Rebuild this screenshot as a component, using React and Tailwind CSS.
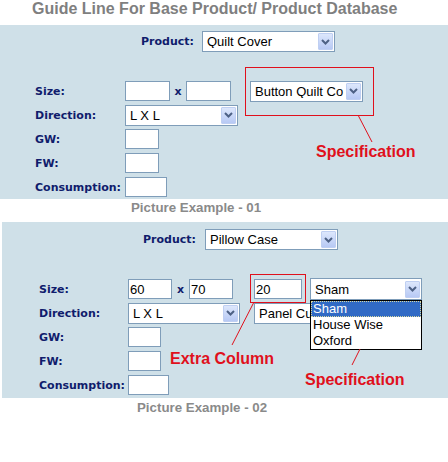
import React from "react";

const LBL = "font-['DejaVu_Sans',Verdana,sans-serif] font-bold text-[11px] text-[#101c6c] leading-none";
const ARIAL = "font-['Liberation_Sans',Arial,sans-serif]";

function Arrow() {
  return (
    <div className="ml-auto mr-[1px] flex h-[17px] w-[15px] shrink-0 items-center justify-center rounded-[1px] border border-[#bfcff2] bg-gradient-to-b from-[#dde7fc] to-[#b7c9f4]">
      <svg width="9" height="6" viewBox="0 0 9 6">
        <path d="M1 1 L4.5 4.5 L8 1" fill="none" stroke="#4d6185" strokeWidth="2" />
      </svg>
    </div>
  );
}

function Select({ text, className }) {
  return (
    <div className={"flex shrink-0 items-center border border-[#7f9db9] bg-white " + className}>
      <div className={ARIAL + " min-w-0 flex-1 overflow-hidden whitespace-nowrap pl-[4px] text-[13px] leading-none text-black"}>
        {text}
      </div>
      <Arrow />
    </div>
  );
}

function Input({ value, className }) {
  return (
    <div className={"flex shrink-0 items-center border border-[#7f9db9] bg-white " + className}>
      <span className={ARIAL + " pl-[1px] text-[13px] leading-none text-black"}>{value}</span>
    </div>
  );
}

function Row({ label, labelW, children }) {
  return (
    <div className="flex h-[24px] items-center">
      <div className={LBL + " " + labelW}>{label}</div>
      {children}
    </div>
  );
}

export default function App() {
  return (
    <div className="relative h-[462px] w-[448px] overflow-hidden bg-white">
      {/* Title */}
      <div className={ARIAL + " h-[25px] pl-[32px] text-[16px] font-bold leading-[18px] text-[#7f7f7f]"}>
        Guide Line For Base Product/ Product Database
      </div>

      {/* Panel 1 */}
      <div className="flex h-[174px] flex-col bg-[#cfe0e8] pt-[6px]">
        <div className="flex h-[21px] items-center pl-[134px]">
          <div className={LBL + " w-[60px] text-right"}>Product:</div>
          <Select text="Quilt Cover" className="ml-[8px] h-[21px] w-[133px]" />
        </div>
        <div className="mt-[27px] flex flex-col pl-[35px]">
          <Row label="Size:" labelW="w-[90px]">
            <Input className="h-[20px] w-[45px]" />
            <div className={LBL + " w-[16px] text-center"}>x</div>
            <Input className="h-[20px] w-[45px]" />
            <Select text="Button Quilt Co" className="ml-[19px] h-[21px] w-[113px]" />
          </Row>
          <Row label="Direction:" labelW="w-[90px]">
            <Select text="L X L" className="h-[21px] w-[113px]" />
          </Row>
          <Row label="GW:" labelW="w-[90px]">
            <Input className="h-[20px] w-[34px]" />
          </Row>
          <Row label="FW:" labelW="w-[90px]">
            <Input className="h-[20px] w-[34px]" />
          </Row>
          <Row label="Consumption:" labelW="w-[90px]">
            <Input className="h-[20px] w-[42px]" />
          </Row>
        </div>
      </div>

      {/* Caption 1 */}
      <div className={ARIAL + " h-[23px] pl-[131px] text-[13.3px] font-bold leading-[18px] text-[#8a8a8a]"}>
        Picture Example - 01
      </div>

      {/* Panel 2 */}
      <div className="ml-[2px] flex h-[176px] flex-col bg-[#cfe0e8] pt-[7px]">
        <div className="flex h-[21px] items-center pl-[134px]">
          <div className={LBL + " w-[60px] text-right"}>Product:</div>
          <Select text="Pillow Case" className="ml-[9px] h-[21px] w-[133px]" />
        </div>
        <div className="mt-[27px] flex flex-col pl-[37px]">
          <Row label="Size:" labelW="w-[89px]">
            <Input value="60" className="h-[20px] w-[44px]" />
            <div className={LBL + " w-[17px] text-center"}>x</div>
            <Input value="70" className="h-[20px] w-[44px]" />
            <Input value="20" className="ml-[21px] h-[20px] w-[48px]" />
            <Select text="Sham" className="ml-[8px] h-[22px] w-[112px]" />
          </Row>
          <Row label="Direction:" labelW="w-[89px]">
            <Select text="L X L" className="h-[21px] w-[112px]" />
            <div className="ml-[14px] flex h-[21px] w-[113px] shrink-0 items-center border border-[#7f9db9] bg-white">
              <div className={ARIAL + " whitespace-nowrap pl-[4px] text-[13px] leading-none text-black"}>Panel Cu</div>
            </div>
          </Row>
          <Row label="GW:" labelW="w-[89px]">
            <Input className="h-[20px] w-[33px]" />
          </Row>
          <Row label="FW:" labelW="w-[89px]">
            <Input className="h-[20px] w-[33px]" />
          </Row>
          <Row label="Consumption:" labelW="w-[89px]">
            <Input className="h-[20px] w-[41px]" />
          </Row>
        </div>
      </div>

      {/* Caption 2 */}
      <div className={ARIAL + " pl-[137px] pt-[1px] text-[13.3px] font-bold leading-[18px] text-[#8a8a8a]"}>
        Picture Example - 02
      </div>

      {/* Overlays: open dropdown list */}
      <div className={ARIAL + " absolute left-[310px] top-[300px] w-[112px] border border-black bg-white text-[13px] leading-[16px] text-black"}>
        <div className="h-[16px] border border-dotted border-[#d8d8a0] bg-[#316ac5] pl-[1px] leading-[14px] text-white">Sham</div>
        <div className="h-[16px] pl-[2px]">House Wise</div>
        <div className="h-[16px] pl-[2px]">Oxford</div>
      </div>

      {/* Annotation boxes and lines */}
      <svg className="pointer-events-none absolute left-0 top-0" width="448" height="462">
        <rect x="245.5" y="67.5" width="128" height="48" fill="none" stroke="#e0101c" strokeWidth="1" />
        <rect x="250.5" y="274.5" width="55" height="28" fill="none" stroke="#e0101c" strokeWidth="1" />
        <line x1="358" y1="115" x2="372" y2="142" stroke="#e0101c" strokeWidth="1" />
        <line x1="254" y1="302" x2="232" y2="345" stroke="#e0101c" strokeWidth="1" />
        <line x1="360" y1="349" x2="352" y2="365" stroke="#e0101c" strokeWidth="1" />
      </svg>

      {/* Annotation texts */}
      <div className={ARIAL + " absolute left-[316px] top-[143px] text-[16px] font-bold leading-[18px] text-[#e0101c]"}>Specification</div>
      <div className={ARIAL + " absolute left-[170px] top-[350px] text-[16px] font-bold leading-[18px] text-[#e0101c]"}>Extra Column</div>
      <div className={ARIAL + " absolute left-[305px] top-[371px] text-[16px] font-bold leading-[18px] text-[#e0101c]"}>Specification</div>
    </div>
  );
}
